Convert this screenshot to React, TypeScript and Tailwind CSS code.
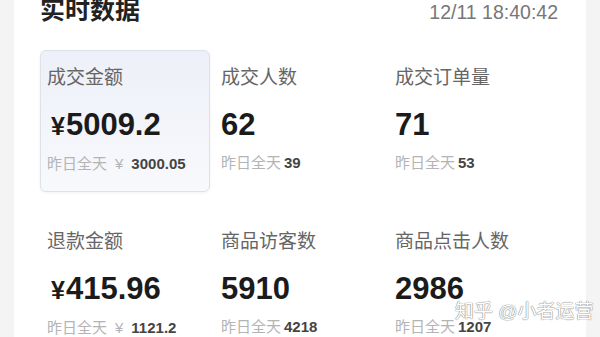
const stats = [
  { label: "成交金额", value: "¥5009.2", yen: true, prev: "3000.05", active: true },
  { label: "成交人数", value: "62", prev: "39" },
  { label: "成交订单量", value: "71", prev: "53" },
  { label: "退款金额", value: "¥415.96", yen: true, prev: "1121.2" },
  { label: "商品访客数", value: "5910", prev: "4218" },
  { label: "商品点击人数", value: "2986", prev: "1207" },
];

function StatCard({ s }: { s: (typeof stats)[number] }) {
  return (
    <div
      className={`flex h-[142px] flex-col rounded-md border px-[6px] pt-[15px] ${
        s.active
          ? "border-[#dde1ea] bg-gradient-to-b from-[#edf0f8] to-[#f8f9fc] shadow-[0_1px_3px_rgba(0,0,0,0.06)]"
          : "border-transparent"
      }`}
    >
      <div className="text-[19px] leading-[24px] text-[#666]">{s.label}</div>
      <div className="mt-[17px] flex items-baseline text-[31px] font-bold leading-[36px] text-[#1b1b1b]">
        {s.yen ? (
          <>
            <span className="mr-[1px] ml-[4px] text-[25px]">¥</span>
            <span>{s.value.slice(1)}</span>
          </>
        ) : (
          s.value
        )}
      </div>
      <div className="mt-[10px] flex items-baseline text-[15px] leading-[20px]">
        <span className="text-[#b4b4b4]">昨日全天</span>
        {s.yen && <span className="ml-[8px] mr-[5px] text-[#b4b4b4]">¥</span>}
        <span className="ml-[3px] font-semibold text-[#444]">{s.prev}</span>
      </div>
    </div>
  );
}

export default function App() {
  return (
    <div className="relative flex h-[337px] w-[600px] overflow-hidden bg-[#f4f4f4] font-['Liberation_Sans','Noto_Sans_CJK_SC',sans-serif]">
      <div className="w-[14px] shrink-0" />
      <div className="flex-1 bg-white pl-[26px] pr-[28px]">
        <div className="-mt-[5px] flex items-center justify-between">
          <h1 className="text-[25px] font-bold leading-[30px] text-[#222]">实时数据</h1>
          <span className="mt-[4px] text-[19.5px] leading-[24px] text-[#777]">12/11 18:40:42</span>
        </div>
        <div className="mt-[25px] grid w-[518px] grid-cols-3 gap-x-[4px] gap-y-[22px]">
          {stats.map((s) => (
            <StatCard key={s.label} s={s} />
          ))}
        </div>
      </div>
      <div className="w-[15px] shrink-0" />
      <div className="absolute left-[455px] top-[300px] text-[19px] leading-[24px] text-white [text-shadow:0_0_1px_#777,0_0_1px_#777]">
        知乎 @小者运营
      </div>
    </div>
  );
}
